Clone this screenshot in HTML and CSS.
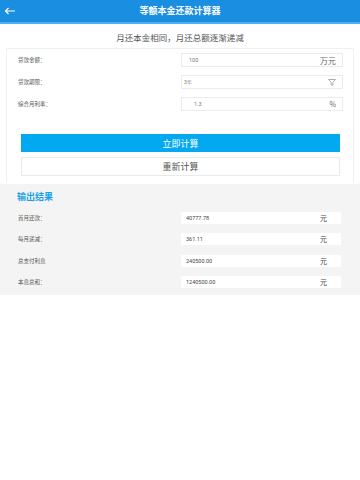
FILE: index.html
```html
<!DOCTYPE html>
<html lang="zh">
<head>
<meta charset="utf-8">
<link rel="stylesheet" href="styles.css">
</head>
<body>
<header class="topbar">
  <span class="back"><svg width="12" height="8" viewBox="0 0 12 8"><path d="M11 4H1.5M4.5 1L1.5 4l3 3" fill="none" stroke="#fff" stroke-width="1.2"/></svg></span>
  <h1 class="title">等额本金还款计算器</h1>
</header>
<div class="subtitle">月还本金相同，月还总额逐渐递减</div>
<section class="card">
  <div class="row">
    <span class="label">贷款金额：</span>
    <div class="box"><span class="val">100</span><span class="unit big">万元</span></div>
  </div>
  <div class="row">
    <span class="label">贷款期限：</span>
    <div class="box sel"><span class="val small">3年</span><svg class="funnel" width="8" height="7" viewBox="0 0 8 7"><path d="M0.5 0.5h7L4.8 3.6V6.5L3.2 5.6V3.6z" fill="none" stroke="#999" stroke-width="0.8"/></svg></div>
  </div>
  <div class="row">
    <span class="label">综合月利率：</span>
    <div class="box"><span class="val ind">1.3</span><span class="unit">%</span></div>
  </div>
  <div class="buttons">
    <button class="btn primary">立即计算</button>
    <button class="btn">重新计算</button>
  </div>
</section>
<section class="output">
  <h2 class="otitle">输出结果</h2>
  <div class="orow"><span class="label">首月还款：</span><div class="obox"><span class="val">40777.78</span><span class="unit">元</span></div></div>
  <div class="orow"><span class="label">每月递减：</span><div class="obox"><span class="val">361.11</span><span class="unit">元</span></div></div>
  <div class="orow"><span class="label">总支付利息</span><div class="obox"><span class="val">240500.00</span><span class="unit">元</span></div></div>
  <div class="orow"><span class="label">本息总和：</span><div class="obox"><span class="val">1240500.00</span><span class="unit">元</span></div></div>
</section>
</body>
</html>
```
FILE: styles.css
```css
* { box-sizing: border-box; }
body {
  margin: 0;
  width: 360px;
  height: 480px;
  background: #fff;
  font-family: "Noto Sans CJK SC", "Noto Sans", sans-serif;
  color: #555;
}
.topbar {
  height: 24px;
  background: #1a8fe2;
  border-bottom: 2px solid #4fb0f0;
  display: flex;
  align-items: center;
  justify-content: center;
  position: relative;
}
.back {
  position: absolute;
  left: 4px;
  top: 7px;
  display: flex;
}
.title {
  margin: 0;
  color: #fff;
  font-size: 9px;
  font-weight: bold;
  line-height: 22px;
}
.subtitle {
  text-align: center;
  font-size: 8.5px;
  color: #555;
  height: 24px;
  line-height: 26px;
}
.card {
  margin: 0 6px;
  border: 1px solid #efefef;
  border-bottom: none;
  padding: 0 0 7px;
}
.row {
  display: flex;
  align-items: center;
  height: 22px;
  padding-left: 11px;
}
.label {
  font-size: 5.5px;
  color: #555;
  width: 163px;
}
.box {
  width: 162px;
  height: 14px;
  border: 1px solid #ebebeb;
  display: flex;
  align-items: center;
  justify-content: space-between;
  padding: 0 6px 0 7px;
}
.val {
  font-family: "Roboto", sans-serif;
  font-size: 5.5px;
  color: #777;
}
.val.small { font-size: 5px; margin-left: -5px; }
.val.ind { padding-left: 5px; }
.unit {
  font-size: 7px;
  color: #666;
}
.unit.big { font-size: 8px; }
.buttons {
  display: flex;
  flex-direction: column;
  gap: 5px;
  padding: 19px 13px 0 14px;
}
.btn {
  height: 19px;
  border: 1px solid #eaeaea;
  background: #fff;
  font-family: "Noto Sans CJK SC", sans-serif;
  font-size: 9px;
  color: #555;
  padding: 0;
}
.btn.primary {
  background: #03a9f0;
  border-color: #03a9f0;
  color: #fff;
  height: 18px;
}
.output {
  background: #f4f4f4;
  margin-top: 1px;
  padding: 6px 0 9px;
  height: 111px;
}
.otitle {
  margin: 0 0 3px 17px;
  font-size: 9px;
  font-weight: bold;
  color: #1aa1e8;
  line-height: 14px;
}
.orow {
  display: flex;
  align-items: center;
  height: 21.5px;
  padding-left: 18px;
}
.orow .label { width: 163px; }
.obox {
  width: 160px;
  height: 12px;
  background: #fff;
  display: flex;
  align-items: center;
  justify-content: space-between;
  padding: 0 14px 0 5px;
}
.obox .val { color: #444; }
.obox .unit { font-size: 7px; color: #444; }
```
